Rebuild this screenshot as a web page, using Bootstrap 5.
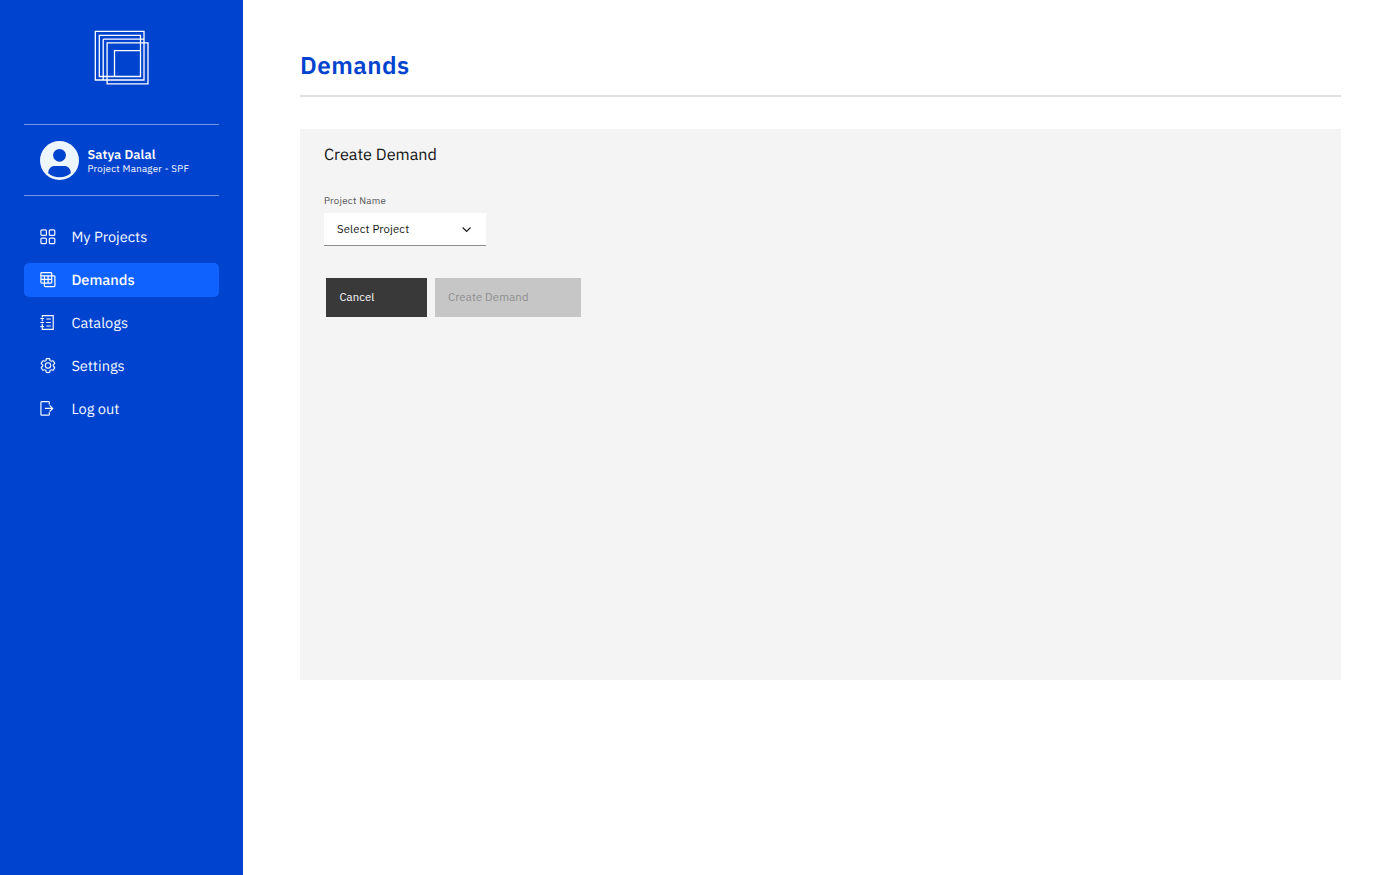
<!DOCTYPE html>
<html lang="en">
<head>
<meta charset="utf-8">
<meta name="viewport" content="width=device-width, initial-scale=1">
<title>Demands</title>
<link href="https://cdn.jsdelivr.net/npm/bootstrap@5.3.0/dist/css/bootstrap.min.css" rel="stylesheet">
<style>
  body { font-family: "IBM Plex Sans", Roboto, "Liberation Sans", sans-serif; color: #161616; text-rendering: geometricPrecision; }
  .sidebar { width: 243px; background: #0043ce; padding: 30px 24.5px 0 24.4px; }
  .logo { margin-bottom: 39px; }
  .profile { height: 72px; border-top: 1px solid #6e95e6; border-bottom: 1px solid #6e95e6; padding-left: 16px; gap: 8px; }
  .profile-text { padding-top: 2px; }
  .profile-name { font-size: 12.8px; line-height: 15px; font-weight: 600; letter-spacing: .1px; }
  .profile-role { font-size: 9.7px; line-height: 13px; letter-spacing: .27px; }
  .menu { margin-top: 24px; gap: 9px; }
  .menu .nav-link { height: 34px; padding: 0 0 0 15.6px; gap: 14.4px; font-size: 14.6px; line-height: 20px; color: #f4f8ff; border-radius: 5px; }
  .menu .nav-link svg { margin-top: -1px; }
  .menu .nav-link span { padding-top: 1px; }
  .menu .nav-link.active { background: #0f62fe; color: #fff; font-weight: 500; }
  .content { padding: 46px 59px 0 57px; }
  .page-title { font-size: 24.3px; line-height: 38px; font-weight: 600; color: #0043ce; letter-spacing: .45px; padding-bottom: 11px; border-bottom: 2px solid #e0e0e0; margin-bottom: 32px; }
  .panel { background: #f4f4f4; height: 551px; padding: 14px 24px; }
  .panel-title { font-size: 16.2px; line-height: 24px; font-weight: 400; margin-bottom: 27px; }
  .field-label { font-size: 9.7px; line-height: 13px; color: #525252; letter-spacing: .27px; margin-bottom: 6px; }
  .select-box { width: 162px; height: 33px; background: #fff; border: 0; border-bottom: 1px solid #8d8d8d; padding: 0 12px 0 13px; font-size: 11.3px; letter-spacing: .15px; color: #161616; }
  .actions { margin: 32px 0 0 2.4px; gap: 8px; }
  .actions .btn { height: 39px; border: 0; border-radius: 0; padding: 0 13px 1px; font-size: 11.3px; letter-spacing: .14px; text-align: left; opacity: 1; }
  .btn-cancel, .btn-cancel:hover { width: 100.6px; background: #393939; color: #fff; }
  .btn-create, .btn-create:disabled { width: 146px; background: #c6c6c6; color: #8d8d8d; }
</style>
</head>
<body>
<div class="d-flex vh-100">
  <aside class="sidebar flex-shrink-0 text-white">
    <svg class="logo d-block mx-auto" width="55" height="55" viewBox="0 0 55 55" fill="none" stroke="#fff" stroke-width="1.3">
      <path d="M1.3 1.3H50V50H1.3ZM5.3 5.3H46.5V46.5H5.3ZM9.2 9.2H50M9.2 9.2V50M13.1 12.8H54V53.8H13.1ZM20.5 20.6H46.5V46.5H20.5Z"/>
    </svg>
    <div class="profile d-flex align-items-center">
      <svg width="39" height="39" viewBox="0 0 39 39"><circle cx="19.5" cy="19.5" r="19.5" fill="#edf5ff"/><circle cx="19.5" cy="14.3" r="6.4" fill="#0043ce"/><path d="M8.2 32.2C8.2 27.5 11 24.9 15 24.9H24C28 24.9 30.8 27.5 30.8 32.2C27.7 35 23.9 36.3 19.5 36.3S11.3 35 8.2 32.2Z" fill="#0043ce"/></svg>
      <div class="profile-text">
        <div class="profile-name">Satya Dalal</div>
        <div class="profile-role">Project Manager - SPF</div>
      </div>
    </div>
    <nav class="menu nav flex-column">
      <a class="nav-link d-flex align-items-center" href="#">
        <svg width="17" height="17" viewBox="0 0 17 17" fill="none" stroke="currentColor" stroke-width="1.2"><rect x=".9" y="1.9" width="5.5" height="5.5" rx="1"/><rect x="9.3" y="1.9" width="5.5" height="5.5" rx="1"/><rect x=".9" y="10.1" width="5.5" height="5.5" rx="1"/><rect x="9.3" y="10.1" width="5.5" height="5.5" rx="1"/></svg>
        <span>My Projects</span>
      </a>
      <a class="nav-link active d-flex align-items-center" href="#">
        <svg width="17" height="17" viewBox="0 0 17 17" fill="none" stroke="currentColor" stroke-width="1.2"><rect x=".9" y="1.6" width="10.8" height="10.5" rx=".8"/><path d="M.9 4.9H11.7M.9 8.4H11.7M4.4 4.9V12.1M8.1 4.9V12.1M11.7 4.8H14.1Q14.9 4.8 14.9 5.6V14.8Q14.9 15.6 14.1 15.6H5.2Q4.4 15.6 4.4 14.8V12.1"/></svg>
        <span>Demands</span>
      </a>
      <a class="nav-link d-flex align-items-center" href="#">
        <svg width="17" height="17" viewBox="0 0 17 17" fill="none" stroke="currentColor" stroke-width="1.2"><path d="M2.3 3.6V1.6H13.2V15.4H2.3V13.4M2.3 5.2V7.3M2.3 9.7V11.9M.4 4.5H4.1M.4 8.5H4.1M.4 12.6H4.1M6.3 5H10.8M6.3 8.5H10.8M6.3 12H10.8"/></svg>
        <span>Catalogs</span>
      </a>
      <a class="nav-link d-flex align-items-center" href="#">
        <svg width="17" height="17" viewBox="1 0 32 32" fill="currentColor" stroke="currentColor" stroke-width=".3"><path d="M27 16.76V15.24L28.92 13.56A2 2 0 0 0 29.3 11L26.94 7A2 2 0 0 0 25.21 6 2 2 0 0 0 24.57 6.1L22.13 6.92A11.35 11.35 0 0 0 20.84 6.18L20.33 3.65A2 2 0 0 0 18.33 2H13.63A2 2 0 0 0 11.63 3.61L11.12 6.14A11.48 11.48 0 0 0 9.82 6.88L7.43 6.06A2 2 0 0 0 6.79 6 2 2 0 0 0 5.06 7L2.7 11A2 2 0 0 0 3.11 13.51L5 15.24V16.76L3.11 18.44A2 2 0 0 0 2.7 21L5.06 25A2 2 0 0 0 6.79 26 2 2 0 0 0 7.43 25.9L9.87 25.08A11.35 11.35 0 0 0 11.16 25.82L11.67 28.35A2 2 0 0 0 13.67 30H18.39A2 2 0 0 0 20.39 28.39L20.9 25.86A11.48 11.48 0 0 0 22.2 25.12L24.63 25.94A2 2 0 0 0 25.27 26 2 2 0 0 0 27 25L29.3 21A2 2 0 0 0 28.89 18.49ZM25.21 24L21.78 22.84A8.86 8.86 0 0 1 19.07 24.41L18.36 28H13.64L12.93 24.45A9.36 9.36 0 0 1 10.23 22.88L6.79 24 4.43 20 7.15 17.6A8.9 8.9 0 0 1 7.15 14.47L4.43 12 6.79 8 10.22 9.16A8.86 8.86 0 0 1 12.93 7.59L13.64 4H18.36L19.07 7.55A9.36 9.36 0 0 1 21.77 9.12L25.21 8 27.57 12 24.85 14.4A8.9 8.9 0 0 1 24.85 17.53L27.57 20Z"/><path d="M16 22A6 6 0 1 1 22 16 5.94 5.94 0 0 1 16 22ZM16 12A3.91 3.91 0 0 0 12 16 3.91 3.91 0 0 0 16 20 3.91 3.91 0 0 0 20 16 3.91 3.91 0 0 0 16 12Z"/></svg>
        <span>Settings</span>
      </a>
      <a class="nav-link d-flex align-items-center" href="#">
        <svg width="17" height="17" viewBox="0 0 17 17" fill="none" stroke="currentColor" stroke-width="1.2"><path d="M9.3 4.5V2.4Q9.3 1.6 8.5 1.6H1.7Q.9 1.6 .9 2.4V14.4Q.9 15.2 1.7 15.2H8.5Q9.3 15.2 9.3 14.4V12.3M4.9 8.4H12.7M9.6 5.3L12.7 8.4L9.6 11.5"/></svg>
        <span>Log out</span>
      </a>
    </nav>
  </aside>
  <main class="content flex-grow-1">
    <h1 class="page-title">Demands</h1>
    <section class="panel">
      <h2 class="panel-title">Create Demand</h2>
      <div class="field-label">Project Name</div>
      <button class="select-box d-flex align-items-center justify-content-between" type="button">
        <span>Select Project</span>
        <svg width="13" height="13" viewBox="0 0 13 13" fill="none" stroke="#161616" stroke-width="1.1"><path d="M1.7 4.5L5.6 8.4L9.5 4.5"/></svg>
      </button>
      <div class="actions d-flex">
        <button class="btn btn-cancel" type="button">Cancel</button>
        <button class="btn btn-create" type="button" disabled>Create Demand</button>
      </div>
    </section>
  </main>
</div>
<script src="https://cdn.jsdelivr.net/npm/bootstrap@5.3.0/dist/js/bootstrap.bundle.min.js"></script>
</body>
</html>
